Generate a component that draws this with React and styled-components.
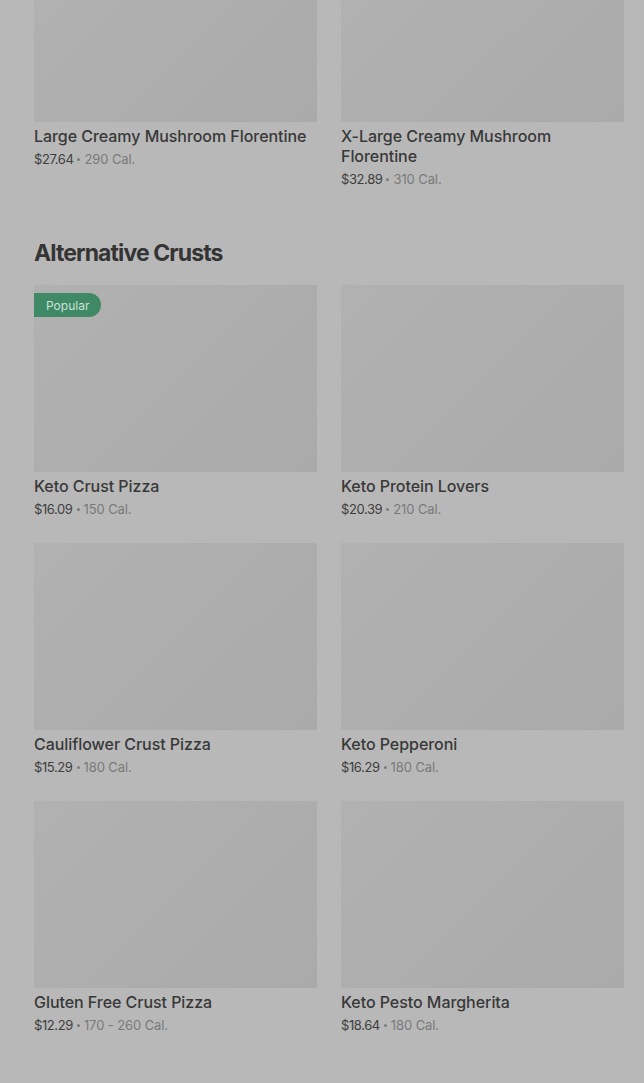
import React from 'react';
import styled, { createGlobalStyle } from 'styled-components';

const GlobalStyle = createGlobalStyle`
  html, body {
    margin: 0;
    padding: 0;
    background: #b8b8b8;
  }
  body {
    font-family: Inter, "Noto Sans", "Liberation Sans", sans-serif;
    color: #333333;
  }
`;

const Page = styled.div`
  width: 644px;
  height: 1083px;
  overflow: hidden;
  background: #b8b8b8;
  padding: 0 20px 0 34px;
  box-sizing: border-box;
`;

const Section = styled.section`
  padding-bottom: ${(p) => p.$bottom || 0}px;
`;

const SectionTitle = styled.h2`
  margin: 0 0 15px;
  height: 34px;
  font-size: 23px;
  line-height: 34px;
  font-weight: 700;
  letter-spacing: -0.9px;
  color: #343434;
`;

const Grid = styled.div`
  display: grid;
  grid-template-columns: 283px 283px;
  column-gap: 24px;
  row-gap: 24px;
`;

const Card = styled.div`
  display: flex;
  flex-direction: column;
`;

const Thumb = styled.div`
  position: relative;
  height: ${(p) => p.$height || 187}px;
  background: linear-gradient(135deg, #b1b1b1 0%, #adadad 55%, #aaaaaa 100%);
`;

const Badge = styled.span`
  position: absolute;
  top: 8px;
  left: 0;
  height: 24px;
  padding: 0 12px;
  display: flex;
  align-items: center;
  background: #3f8966;
  color: #cde2d6;
  font-size: 12px;
  border-radius: 0 12px 12px 0;
`;

const Name = styled.div`
  margin-top: 4px;
  font-size: 16px;
  line-height: 20px;
  font-weight: 500;
  color: #383838;
  letter-spacing: -0.05px;
`;

const Meta = styled.div`
  margin-top: 3px;
  height: 20px;
  font-size: 13px;
  line-height: 20px;
  color: #3e3e3e;
  letter-spacing: -0.4px;
`;

const Cal = styled.span`
  color: #7a7a7a;
  letter-spacing: -0.1px;
`;

const Dot = styled.span`
  display: inline-block;
  width: 3px;
  height: 3px;
  margin: 0 4px;
  border-radius: 50%;
  background: #7a7a7a;
  vertical-align: 3px;
`;

const Item = ({ name, price, cal, badge, thumb }) => (
  <Card>
    <Thumb $height={thumb}>{badge && <Badge>{badge}</Badge>}</Thumb>
    <Name>{name}</Name>
    <Meta>
      {price}
      <Dot />
      <Cal>{cal}</Cal>
    </Meta>
  </Card>
);

const crusts = [
  { name: 'Keto Crust Pizza', price: '$16.09', cal: '150 Cal.', badge: 'Popular' },
  { name: 'Keto Protein Lovers', price: '$20.39', cal: '210 Cal.' },
  { name: 'Cauliflower Crust Pizza', price: '$15.29', cal: '180 Cal.' },
  { name: 'Keto Pepperoni', price: '$16.29', cal: '180 Cal.' },
  { name: 'Gluten Free Crust Pizza', price: '$12.29', cal: '170 - 260 Cal.' },
  { name: 'Keto Pesto Margherita', price: '$18.64', cal: '180 Cal.' },
];

const App = () => (
  <Page>
    <GlobalStyle />
    <Section $bottom={47}>
      <Grid>
        <Item
          thumb={122}
          name="Large Creamy Mushroom Florentine"
          price="$27.64"
          cal="290 Cal."
        />
        <Item
          thumb={122}
          name="X-Large Creamy Mushroom Florentine"
          price="$32.89"
          cal="310 Cal."
        />
      </Grid>
    </Section>
    <Section>
      <SectionTitle>Alternative Crusts</SectionTitle>
      <Grid>
        {crusts.map((c) => (
          <Item key={c.name} {...c} />
        ))}
      </Grid>
    </Section>
  </Page>
);

export default App;
